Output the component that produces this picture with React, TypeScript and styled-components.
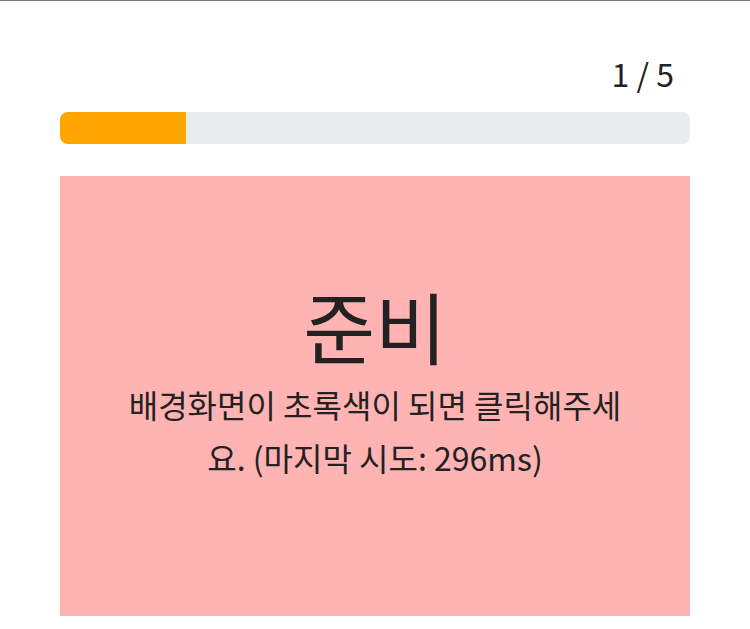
import React from "react";
import styled, { createGlobalStyle } from "styled-components";

const GlobalStyle = createGlobalStyle`
  html, body { margin: 0; padding: 0; background: #ffffff; }
  body {
    font-family: "Noto Sans CJK KR", "Noto Sans", sans-serif;
    color: #222222;
    border-top: 1px solid #7a7a7a;
  }
`;

const Page = styled.div`
  width: 630px;
  margin: 0 auto;
  padding-top: 44px;
  display: flex;
  flex-direction: column;
`;

const Counter = styled.div`
  text-align: right;
  font-size: 32px;
  line-height: 56px;
  padding-right: 16px;
  color: #222222;
`;

const Track = styled.div`
  margin-top: 11px;
  height: 32px;
  border-radius: 8px;
  background: #e9ecef;
  overflow: hidden;
`;

const Fill = styled.div`
  height: 100%;
  background: #ffa500;
`;

const Stage = styled.div<{ $bg: string }>`
  margin-top: 32px;
  height: 440px;
  background: ${(p) => p.$bg};
  display: flex;
  flex-direction: column;
  align-items: center;
  justify-content: center;
  padding: 0 60px 31px;
  box-sizing: border-box;
  text-align: center;
  cursor: pointer;
`;

const Title = styled.h1`
  margin: 0 0 5px;
  font-size: 78px;
  font-weight: 400;
  line-height: 95px;
`;

const Message = styled.p`
  margin: 0;
  font-size: 32px;
  line-height: 53px;
`;

export default function App() {
  const current = 1;
  const total = 5;
  return (
    <>
      <GlobalStyle />
      <Page>
        <Counter>
          {current} / {total}
        </Counter>
        <Track>
          <Fill style={{ width: `${(current / total) * 100}%` }} />
        </Track>
        <Stage $bg="#ffb3b3">
          <Title>준비</Title>
          <Message>배경화면이 초록색이 되면 클릭해주세요. (마지막 시도: 296ms)</Message>
        </Stage>
      </Page>
    </>
  );
}
